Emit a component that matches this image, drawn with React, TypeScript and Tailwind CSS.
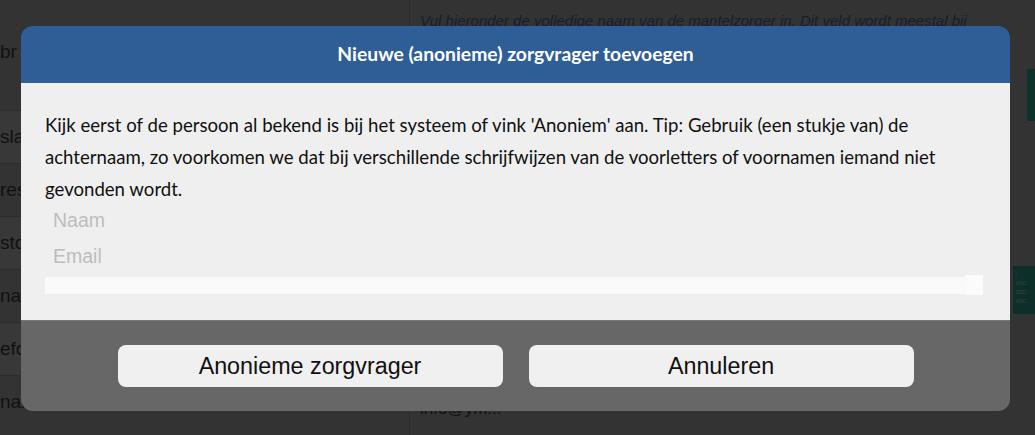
import React from 'react';

const rows = ['sla', 'res', 'sto', 'nat', 'efo', 'nai'];

// the app page underneath the modal, already dimmed by the backdrop
const Page: React.FC = () => (
  <div className="grid h-[435px] w-[1035px] grid-cols-[410px_1fr] bg-[#333333]">
    <div className="flex flex-col border-r border-[#2a2a2a] bg-[#333333]">
      <div className="flex h-[110px] items-start pt-[38px] text-[19px] text-[#111111]">
        <span>br</span>
      </div>
      {rows.map((r, i) => (
        <div
          key={r}
          className={`flex h-[53px] items-center border-t border-[#2c2c2c] text-[19px] text-[#111111] ${
            i % 2 === 0 ? 'bg-[#383838]' : 'bg-[#333333]'
          }`}
        >
          <span>{r}</span>
        </div>
      ))}
    </div>
    <div className="flex flex-col bg-[#333333] pl-[10px]">
      <p className="pt-[10px] text-[15px] italic text-[#1a1c2e] whitespace-nowrap">
        Vul hieronder de volledige naam van de mantelzorger in. Dit veld wordt meestal bij
      </p>
      <div className="mt-[36px] ml-auto h-[52px] w-[8px] bg-[#0d322c]" />
      <div className="mt-[145px] ml-auto flex h-[48px] w-[22px] flex-col bg-[#0c2f2a] pl-[2px] pt-[3px] text-[7px] leading-[9px] text-[#3a3a3a]">
        <span>|</span>
        <span>abc</span>
        <span>abc</span>
        <span>abc</span>
      </div>
      <p className="mt-auto pb-[14px] text-[17px] text-[#111111]">info@ym...</p>
    </div>
  </div>
);

const Modal: React.FC = () => (
  <div className="absolute left-[21px] top-[26px] flex w-[989px] flex-col overflow-hidden rounded-[12px] font-['Lato',sans-serif]">
    <div className="flex h-[57px] items-center justify-center bg-[#2f5e97]">
      <h2 className="text-[19.3px] font-bold text-white">Nieuwe (anonieme) zorgvrager toevoegen</h2>
    </div>
    <div className="flex flex-col bg-[#efefef] px-[24px] pt-[26px] pb-[26px]">
      <p className="text-[18.6px] leading-[32px] text-[#111111]">
        Kijk eerst of de persoon al bekend is bij het systeem of vink 'Anoniem' aan. Tip: Gebruik (een stukje van) de
        achternaam, zo voorkomen we dat bij verschillende schrijfwijzen van de voorletters of voornamen iemand niet
        gevonden wordt.
      </p>
      <input
        placeholder="Naam"
        className="mt-[-3px] h-[36px] bg-transparent px-[8px] font-['Liberation_Sans',Arial,sans-serif] text-[19.5px] outline-none placeholder:text-[#bdbdbd]"
      />
      <input
        placeholder="Email"
        className="h-[36px] bg-transparent px-[8px] font-['Liberation_Sans',Arial,sans-serif] text-[19.5px] outline-none placeholder:text-[#bdbdbd]"
      />
      <div className="mt-[3px] mr-[3px] flex h-[17px] items-stretch">
        <div className="flex-1 bg-[#fafafa]" />
        <div className="mt-[-2px] h-[20px] w-[18px] bg-[#fbfbfb]" />
      </div>
    </div>
    <div className="flex h-[91px] items-center justify-center gap-[26px] border-t border-[#767676] bg-[#676767] font-['Liberation_Sans',Arial,sans-serif]">
      <button className="h-[42px] w-[385px] rounded-[8px] bg-[#f0f0f0] text-[23.3px] text-[#111111]">
        Anonieme zorgvrager
      </button>
      <button className="h-[42px] w-[385px] rounded-[8px] bg-[#f0f0f0] text-[23.3px] text-[#111111]">
        Annuleren
      </button>
    </div>
  </div>
);

const App: React.FC = () => (
  <div className="relative h-[435px] w-[1035px] overflow-hidden bg-[#333333] font-['Liberation_Sans',Arial,sans-serif]">
    <Page />
    <Modal />
  </div>
);

export default App;
